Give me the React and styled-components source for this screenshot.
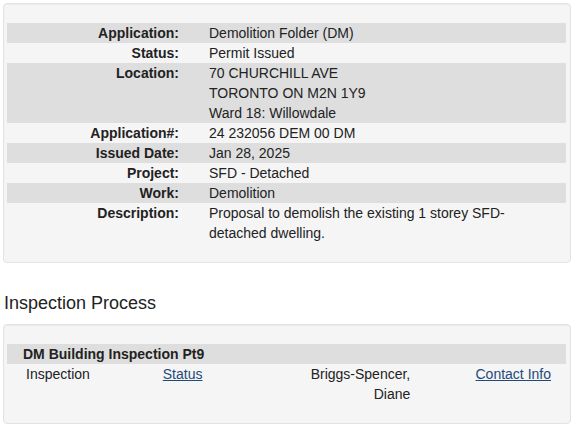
import React from "react";
import styled, { createGlobalStyle } from "styled-components";

const Global = createGlobalStyle`
  html, body { margin: 0; padding: 0; background: #ffffff; }
  body {
    font-family: "Liberation Sans", Arial, Helvetica, sans-serif;
    font-size: 14px;
    line-height: 20px;
    color: #222222;
  }
`;

const Page = styled.div`
  padding: 3px;
  display: flex;
  flex-direction: column;
`;

const Well = styled.div`
  background: #f5f5f5;
  border: 1px solid #e3e3e3;
  border-radius: 4px;
  box-shadow: inset 0 1px 1px rgba(0, 0, 0, 0.04);
  padding: 19px 4px 19px 3px;
`;

const DetailRow = styled.div`
  display: grid;
  grid-template-columns: 182px 1fr;
  background: ${(p) => (p.$shaded ? "#dedede" : "transparent")};
`;

const Label = styled.div`
  font-weight: bold;
  text-align: right;
  padding-right: 10px;
`;

const Value = styled.div`
  padding-left: 20px;
  padding-right: 30px;
`;

const Heading = styled.h3`
  margin: 29px 0 10px 1px;
  font-size: 18px;
  font-weight: normal;
  line-height: 22px;
  color: #222222;
`;

const GroupHeader = styled.div`
  background: #dedede;
  font-weight: bold;
  padding: 0 16px;
`;

const InspectionRow = styled.div`
  display: grid;
  grid-template-columns: repeat(4, 1fr);
`;

const Cell = styled.div`
  padding: 0 ${(p) => p.$pr || 16}px 0 ${(p) => p.$pl || 16}px;
  text-align: ${(p) => p.$align || "left"};
`;

const Link = styled.a`
  color: #1f4a7a;
  text-decoration: underline;
  cursor: pointer;
`;

const details = [
  ["Application:", ["Demolition Folder (DM)"]],
  ["Status:", ["Permit Issued"]],
  ["Location:", ["70 CHURCHILL AVE", "TORONTO ON M2N 1Y9", "Ward 18: Willowdale"]],
  ["Application#:", ["24 232056 DEM 00 DM"]],
  ["Issued Date:", ["Jan 28, 2025"]],
  ["Project:", ["SFD - Detached"]],
  ["Work:", ["Demolition"]],
  ["Description:", ["Proposal to demolish the existing 1 storey SFD-detached dwelling."]],
];

export default function App() {
  return (
    <>
      <Global />
      <Page>
        <Well>
          {details.map(([label, lines], i) => (
            <DetailRow key={label} $shaded={i % 2 === 0}>
              <Label>{label}</Label>
              <Value>
                {lines.map((l, j) => (
                  <div key={j}>{l}</div>
                ))}
              </Value>
            </DetailRow>
          ))}
        </Well>
        <Heading>Inspection Process</Heading>
        <Well>
          <GroupHeader>DM Building Inspection Pt9</GroupHeader>
          <InspectionRow>
            <Cell $pl={19}>Inspection</Cell>
            <Cell>
              <Link>Status</Link>
            </Cell>
            <Cell $align="right">Briggs-Spencer, Diane</Cell>
            <Cell $align="right" $pr={15}>
              <Link>Contact Info</Link>
            </Cell>
          </InspectionRow>
        </Well>
      </Page>
    </>
  );
}
